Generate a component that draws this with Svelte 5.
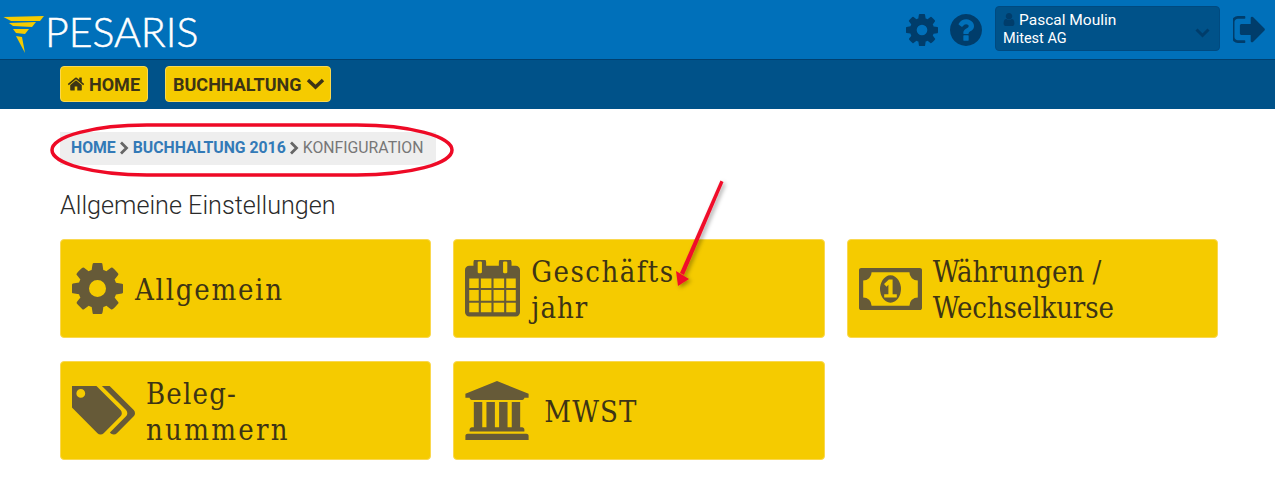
<script>
  const cog = "M1152 896q0-106-75-181t-181-75-181 75-75 181 75 181 181 75 181-75 75-181zm512-109v222q0 12-8 24t-20 13l-185 28q-19 54-39 91 35 50 107 138 10 12 10 25t-9 23q-27 37-99 108t-94 71q-12 0-26-9l-138-108q-44 23-91 38-16 136-29 186-7 28-36 28h-222q-14 0-24.500-8.500t-11.500-21.500l-28-184q-49-16-90-37l-141 107q-10 9-25 9-14 0-25-11-126-114-165-168-7-10-7-23 0-12 8-23 15-21 51-66.500t54-70.500q-27-50-41-99l-183-27q-13-2-21-12.500t-8-23.500v-222q0-13 8-24t19-13l186-28q14-46 39-92-40-57-107-138-10-12-10-24 0-10 9-23 26-36 98.500-107.500t94.500-71.500q13 0 26 10l138 107q44-23 91-38 16-136 29-186 7-28 36-28h222q14 0 24.500 8.500t11.500 21.500l28 184q49 16 90 37l142-107q9-9 24-9 13 0 25 10 129 119 165 170 7 8 7 22 0 12-8 23-15 21-51 66.500t-54 70.500q26 50 41 98l183 28q13 2 21 12.500t8 23.500z";
  const home = "M1472 992v480q0 26-19 45t-45 19h-384v-384h-256v384h-384q-26 0-45-19t-19-45v-480q0-1 .5-3t.5-3l575-474 575 474q1 2 1 6zm223-69l-62 74q-8 9-21 11h-3q-13 0-21-7l-692-577-692 577q-12 8-24 7-13-2-21-11l-62-74q-8-10-7-23.500t11-21.500l719-599q32-26 76-26t76 26l244 204v-195q0-14 9-23t23-9h192q14 0 23 9t9 23v408l219 182q10 8 11 21.500t-7 23.500z";
  const help = "M1024 1376v-192q0-14-9-23t-23-9h-192q-14 0-23 9t-9 23v192q0 14 9 23t23 9h192q14 0 23-9t9-23zm256-672q0-88-55.500-163t-138.500-116-170-41q-243 0-371 213-15 24 8 42l132 100q7 6 19 6 16 0 25-12 53-68 86-92 34-24 86-24 48 0 85.500 26t37.500 59q0 38-20 61t-68 45q-63 28-115.500 86.500t-52.500 125.500v36q0 14 9 23t23 9h192q14 0 23-9t9-23q0-19 21.500-49.500t54.500-49.500q32-18 49-28.500t46-35 44.500-48 28-60.500 12.500-81zm384 192q0 209-103 385.500t-279.500 279.500-385.500 103-385.500-103-279.500-279.500-103-385.500 103-385.500 279.500-279.500 385.500-103 385.500 103 279.500 279.500 103 385.500z";
  const signout = "M704 1440q0 4 1 20t.5 26.500-3 23.500-10 19.500-20.500 6.500h-320q-119 0-203.500-84.500t-84.500-203.500v-704q0-119 84.500-203.500t203.500-84.500h320q13 0 22.500 9.500t9.500 22.500q0 4 1 20t.5 26.500-3 23.500-10 19.500-20.500 6.500h-320q-66 0-113 47t-47 113v704q0 66 47 113t113 47h312l11.500 1 11.500 3 8 5.500 7 9 2 13.500zm928-544q0 26-19 45l-544 544q-19 19-45 19t-45-19-19-45v-288h-448q-26 0-45-19t-19-45v-384q0-26 19-45t45-19h448v-288q0-26 19-45t45-19 45 19l544 544q19 19 19 45z";
  const user = "M1536 1399q0 109-62.500 187t-150.500 78h-854q-88 0-150.500-78t-62.500-187q0-85 8.500-160.500t31.500-152 58.500-131 94-89 134.500-34.500q131 128 313 128t313-128q76 0 134.500 34.500t94 89 58.500 131 31.500 152 8.500 160.500zm-256-887q0 159-112.500 271.500t-271.500 112.500-271.500-112.500-112.500-271.500 112.500-271.500 271.500-112.500 271.500 112.500 112.500 271.500z";
  const tags = "M384 448q0-53-37.500-90.500t-90.500-37.500-90.500 37.500-37.500 90.500 37.500 90.500 90.500 37.500 90.500-37.500 37.500-90.500zm1067 576q0 53-37 90l-491 492q-39 37-91 37-53 0-90-37l-715-716q-38-37-64.500-101t-26.500-117v-416q0-52 38-90t90-38h416q53 0 117 26.500t102 64.500l715 714q37 39 37 91zm384 0q0 53-37 90l-491 492q-39 37-91 37-36 0-59-14t-53-45l470-470q37-37 37-90 0-52-37-91l-715-714q-38-38-102-64.500t-117-26.500h224q53 0 117 26.500t102 64.500l715 714q37 39 37 91z";
  const calendar = "M192 1664h288v-288h-288v288zm352 0h320v-288h-320v288zm-352-352h288v-320h-288v320zm352 0h320v-320h-320v320zm-352-384h288v-288h-288v288zm736 736h320v-288h-320v288zm-384-736h320v-288h-320v288zm768 736h288v-288h-288v288zm-384-352h320v-320h-320v320zm-352-864v-288q0-13-9.500-22.500t-22.500-9.500h-64q-13 0-22.500 9.500t-9.500 22.500v288q0 13 9.500 22.500t22.500 9.500h64q13 0 22.500-9.500t9.500-22.500zm736 864h288v-320h-288v320zm-384-384h320v-288h-320v288zm384 0h288v-288h-288v288zm32-480v-288q0-13-9.500-22.500t-22.500-9.500h-64q-13 0-22.500 9.500t-9.500 22.500v288q0 13 9.500 22.500t22.500 9.500h64q13 0 22.500-9.500t9.500-22.500zm384-64v1280q0 52-38 90t-90 38h-1408q-52 0-90-38t-38-90v-1280q0-52 38-90t90-38h128v-96q0-66 47-113t113-47h64q66 0 113 47t47 113v96h384v-96q0-66 47-113t113-47h64q66 0 113 47t47 113v96h128q52 0 90 38t38 90z";
  const money = "M768 1152h384v-96h-128v-448h-114l-148 137 77 80q42-37 55-57h2v288h-128v96zm512-256q0 70-21 142t-59.500 134-101.500 101-138 39-138-39-101.500-101-59.500-134-21-142 21-142 59.500-134 101.500-101 138-39 138 39 101.500 101 59.500 134 21 142zm512 256v-512q-106 0-181-75t-75-181h-1152q0 106-75 181t-181 75v512q106 0 181 75t75 181h1152q0-106 75-181t181-75zm128-832v1152q0 26-19 45t-45 19h-1792q-26 0-45-19t-19-45v-1152q0-26 19-45t45-19h1792q26 0 45 19t19 45z";
  const bank = "M960 0l960 384v128h-128q0 26-20.500 45t-48.500 19h-1526q-28 0-48.500-19t-20.500-45h-128v-128zm-704 640h256v768h128v-768h256v768h128v-768h256v768h128v-768h256v768h59q28 0 48.500 19t20.500 45v64h-1664v-64q0-26 20.500-45t48.500-19h59v-768zm1595 960q28 0 48.500 19t20.500 45v128h-1920v-128q0-26 20.500-45t48.500-19h1782z";

  const cards = [
    { lines: [["Allgemein", 1.75]], d: cog, box: "128 128 1536 1536", w: 51, h: 51, gap: 12 },
    { lines: [["Geschäfts", 1.45], ["jahr", 1]], d: calendar, box: "64 128 1664 1664", w: 55, h: 58, gap: 11 },
    { lines: [["Währungen /", 0], ["Wechselkurse", -0.1]], d: money, box: "0 256 1920 1280", w: 63, h: 42, gap: 11 },
    { lines: [["Beleg-", 1.2], ["nummern", 2.3]], d: tags, box: "0 256 1835 1408", w: 63, h: 50, gap: 11 },
    { lines: [["MWST", 1.1]], d: bank, box: "0 0 1920 1792", w: 64, h: 59, gap: 15 }
  ];
</script>

<div class="page">
  <header class="top">
    <div class="brand">
      <svg class="rays" width="46" height="48" viewBox="0 0 46 48" aria-hidden="true">
        <path d="M3.500 11 L44 10 L40 15 L11 15 Z" />
        <path d="M9 17 L36 16 L32 21 L13 20 Z" />
        <path d="M13 23 L29 23 L25 28 L16 27 Z" />
        <path d="M16 30 L22 31 L25 47 Z" />
      </svg>
      <span class="logo">PESARIS</span>
    </div>
    <div class="tools">
      <svg class="tool cog" viewBox="128 128 1536 1536"><path d={cog} /></svg>
      <svg class="tool help" viewBox="128 128 1536 1536"><path d={help} /></svg>
      <div class="account">
        <div class="who">
          <div class="name">
            <svg width="12" height="13" viewBox="256 128 1280 1536"><path d={user} /></svg>
            Pascal Moulin
          </div>
          <div class="firm">Mitest AG</div>
        </div>
        <svg class="caret" width="15" height="10" viewBox="0 0 15 10"><polyline points="1.500,1.500 7.500,7.500 13.500,1.500" /></svg>
      </div>
      <svg class="tool out" viewBox="128 256 1504 1280"><path d={signout} /></svg>
    </div>
  </header>

  <nav class="menu">
    <button class="menu-btn">
      <svg class="house" width="18" height="16" viewBox="0 128 1792 1536"><path d={home} /></svg>
      HOME
    </button>
    <button class="menu-btn">
      BUCHHALTUNG
      <svg class="down" width="19" height="12" viewBox="0 0 19 12"><polyline points="2,2 9.500,9 17,2" /></svg>
    </button>
  </nav>

  <main class="content">
    <div class="crumbs">
      <a href="#home">HOME</a>
      <svg width="10" height="14" viewBox="0 0 10 14"><polyline points="2,1.500 7.500,7 2,12.500" /></svg>
      <a href="#buchhaltung">BUCHHALTUNG 2016</a>
      <svg width="10" height="14" viewBox="0 0 10 14"><polyline points="2,1.500 7.500,7 2,12.500" /></svg>
      <span>KONFIGURATION</span>
    </div>

    <h2>Allgemeine Einstellungen</h2>

    <div class="grid">
      {#each cards as card}
        <div class="card" style="gap: {card.gap}px">
          <svg width={card.w} height={card.h} viewBox={card.box}><path d={card.d} /></svg>
          <div class="label">
            {#each card.lines as [text, spacing]}
              <div style="letter-spacing: {spacing}px">{text}</div>
            {/each}
          </div>
        </div>
      {/each}
    </div>
  </main>

  <!-- red annotations lie over the screenshot -->
  <svg class="marks" width="1275" height="480" viewBox="0 0 1275 480">
    <defs>
      <filter id="soft" x="-30%" y="-30%" width="160%" height="160%">
        <feDropShadow dx="2" dy="2" stdDeviation="2" flood-color="#000" flood-opacity="0.35" />
      </filter>
    </defs>
    <rect x="52" y="125" width="400" height="50" rx="95" ry="25" fill="none" stroke="#ee0a26" stroke-width="3.500" />
    <g filter="url(#soft)" fill="#f00f2a">
      <polygon points="720.500,180.500 723.500,182 684,275 680,273" />
      <polygon points="678,286 676,271 689,279" />
    </g>
  </svg>
</div>

<style>
  :global(body) {
    margin: 0;
    background: #fff;
    font-family: Roboto, "Liberation Sans", sans-serif;
  }
  .page {
    position: relative;
    width: 1275px;
    height: 480px;
    overflow: hidden;
  }
  .marks {
    position: absolute;
    top: 0;
    left: 0;
    pointer-events: none;
  }
  .top {
    height: 59px;
    background: #0070ba;
    border-bottom: 1px solid #004070;
    display: flex;
    justify-content: space-between;
    align-items: center;
  }
  .brand {
    display: flex;
    align-items: center;
    height: 100%;
  }
  .rays {
    fill: #f5cb00;
    flex: none;
  }
  .logo {
    font-family: Lato, sans-serif;
    font-weight: 300;
    font-size: 41px;
    color: #fff;
    margin-left: -1px;
    margin-top: 3px;
    -webkit-text-stroke: 0.5px #fff;
  }
  .tools {
    display: flex;
    align-items: center;
    padding-right: 10px;
  }
  .tool {
    fill: #003d6b;
    flex: none;
  }
  .cog {
    width: 32px;
    height: 32px;
    margin-right: 12px;
  }
  .help {
    width: 32px;
    height: 32px;
    margin-right: 13px;
  }
  .out {
    width: 32px;
    height: 27px;
    margin-left: 13px;
  }
  .account {
    width: 225px;
    height: 45px;
    margin-bottom: 2px;
    box-sizing: border-box;
    background: #005289;
    border: 1px solid #004a80;
    border-radius: 4px;
    display: flex;
    align-items: center;
    justify-content: space-between;
    padding: 0 9px 0 7px;
    color: #fff;
    font-size: 14.500px;
    line-height: 18px;
  }
  .who {
    padding-top: 1px;
  }
  .firm {
    margin-top: 1px;
  }
  .name {
    display: flex;
    align-items: center;
    gap: 4px;
    height: 19px;
    font-size: 15.500px;
  }
  .name svg {
    fill: #003d6b;
  }
  .caret {
    fill: none;
    stroke: #003d6b;
    stroke-width: 3px;
    margin-top: 9px;
  }
  .menu {
    height: 49px;
    background: #005289;
    display: flex;
    align-items: center;
    gap: 17px;
    padding: 0 0 2px 60px;
    box-sizing: border-box;
  }
  .menu-btn {
    height: 36px;
    box-sizing: border-box;
    padding: 1px 7px 0 7px;
    display: flex;
    align-items: center;
    gap: 4px;
    background: #f5cb00;
    border: 1px solid #fad84f;
    border-radius: 4px;
    color: #3d3415;
    font-family: inherit;
    font-weight: 700;
    font-size: 18px;
  }
  .menu-btn svg {
    fill: #3d3415;
  }
  .menu-btn .house {
    margin-left: -1px;
  }
  .menu-btn .down {
    fill: none;
    stroke: #3d3415;
    stroke-width: 3.500px;
    margin-right: -2px;
  }
  .content {
    padding: 23px 57px 0 60px;
  }
  .crumbs {
    display: inline-flex;
    align-items: center;
    height: 33px;
    box-sizing: border-box;
    padding: 0 12px 2px 11px;
    gap: 3.500px;
    background: #eee;
    font-size: 15.800px;
    color: #777;
  }
  .crumbs a {
    color: #337ab7;
    font-weight: 700;
    text-decoration: none;
  }
  .crumbs svg {
    fill: none;
    stroke: #666;
    stroke-width: 2.800px;
    margin-top: 1px;
  }
  h2 {
    margin: 26px 0 18px;
    font-size: 25.200px;
    line-height: 30px;
    font-weight: 300;
    color: #2a2a2a;
  }
  .grid {
    display: grid;
    grid-template-columns: repeat(3, 1fr);
    column-gap: 22px;
    row-gap: 23px;
  }
  .card {
    height: 99px;
    box-sizing: border-box;
    display: flex;
    align-items: center;
    padding-left: 11px;
    background: #f5cb00;
    border: 1px solid #fad84f;
    border-radius: 4px;
  }
  .card svg {
    fill: #665a38;
    flex: none;
  }
  .label {
    padding-top: 3px;
    font-family: "DejaVu Serif Condensed", "DejaVu Serif", serif;
    font-size: 29px;
    line-height: 36.500px;
    color: #3d3415;
  }
</style>
